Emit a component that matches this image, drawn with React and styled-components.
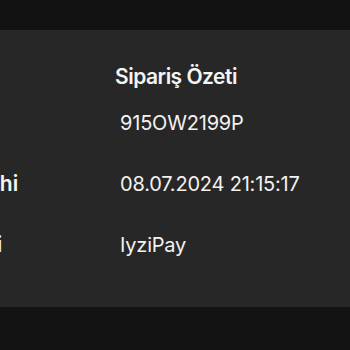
import React from "react";
import styled, { createGlobalStyle } from "styled-components";

const Global = createGlobalStyle`
  html, body { margin: 0; padding: 0; background: #131313; }
  body { font-family: Inter, "Noto Sans", sans-serif; color: #f2f2f2; overflow: hidden; }
`;

const Page = styled.div`
  width: 350px;
  height: 350px;
  display: flex;
  flex-direction: column;
  background: #131313;
  overflow: hidden;
`;

const TopBar = styled.div`
  height: 30px;
  flex: none;
  background: #121212;
`;

const Panel = styled.section`
  height: 277px;
  flex: none;
  background: #272727;
  display: flex;
  flex-direction: column;
  padding-top: 34px;
  box-sizing: border-box;
`;

const Title = styled.h2`
  margin: 0;
  padding-left: 2px;
  text-align: center;
  font-size: 21px;
  line-height: 26px;
  font-weight: 600;
  letter-spacing: -0.5px;
  color: #f4f4f4;
`;

const Rows = styled.div`
  display: grid;
  grid-template-columns: 234px max-content;
  row-gap: 35px;
  margin-left: -114px;
  margin-top: 20px;
`;

const Label = styled.div`
  font-size: 21px;
  line-height: 26px;
  font-weight: 600;
  white-space: nowrap;
  color: #f4f4f4;
`;

const Value = styled.div`
  font-size: 20px;
  line-height: 26px;
  font-weight: 400;
  letter-spacing: -0.2px;
  white-space: nowrap;
  color: #f2f2f2;
`;

const rows = [
  ["Sipariş No", "915OW2199P"],
  ["Sipariş Tarihi", "08.07.2024 21:15:17"],
  ["Ödeme Tipi", "IyziPay"],
];

export default function App() {
  return (
    <>
      <Global />
      <Page>
        <TopBar />
        <Panel>
          <Title>Sipariş Özeti</Title>
          <Rows>
            {rows.map(([l, v]) => (
              <React.Fragment key={l}>
                <Label>{l}</Label>
                <Value>{v}</Value>
              </React.Fragment>
            ))}
          </Rows>
        </Panel>
      </Page>
    </>
  );
}
